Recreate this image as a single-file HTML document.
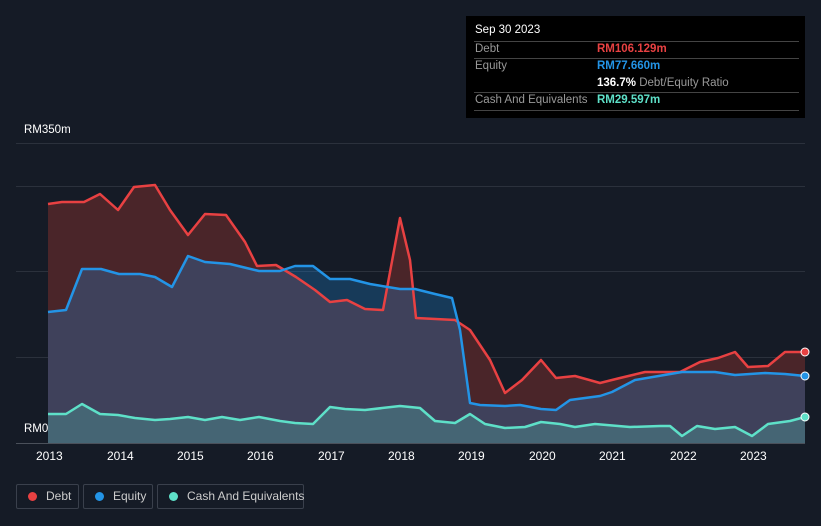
<!DOCTYPE html>
<html><head><meta charset="utf-8"><style>
body{margin:0;width:821px;height:526px;background:#151b26;font-family:"Liberation Sans",sans-serif;overflow:hidden;position:relative}
.t{position:absolute;color:#fff;font-size:12px}
.tip{position:absolute;left:466px;top:16px;width:339px;height:102px;background:#000;}
.tip div{position:absolute;font-size:11.5px;white-space:nowrap}
.ln{position:absolute;left:8px;width:325px;height:1px;background:#444}
.lg{position:absolute;top:484px;height:25px;border:1px solid #3a404c;border-radius:2px;color:#ccc;font-size:12px;line-height:23px;box-sizing:border-box;white-space:nowrap}
.lg i{display:inline-block;width:9px;height:9px;border-radius:50%;margin:0 9px 0 11px;vertical-align:-1px}
</style></head><body>
<svg width="821" height="526" style="position:absolute;left:0;top:0">
<g stroke="#2b313c" stroke-width="1">
<line x1="16" y1="143.5" x2="805" y2="143.5"/><line x1="16" y1="186.5" x2="805" y2="186.5"/><line x1="16" y1="271.5" x2="805" y2="271.5"/><line x1="16" y1="357.5" x2="805" y2="357.5"/></g>
<line x1="16" y1="443.5" x2="805" y2="443.5" stroke="#4a505a"/>
<path d="M48,204 L62,202 84,202 100,194 118,210 134,187 155,185 170,210 188,235 205,214 226,215 245,242 257,266 276,265 296,277 315,290 330,302 347,300 365,309 383,310 400,218 410,260 416,318 455,320 470,330 490,360 505,393 522,380 541,360 556,378 575,376 600,383 620,378 645,372 680,372 700,362 718,358 735,352 748,367 768,366 785,352 805,352 L805,443 48,443Z" fill="#4a2529"/>
<path d="M48,312 L66,310 82,269 101,269 119,274 140,274 155,277 172,287 188,256 205,262 230,264 259,271 280,271 295,266 313,266 330,279 350,279 370,284 400,289 415,289 435,294 452,298 460,330 470,403 480,405 505,406 520,405 541,409 556,410 570,400 600,396 612,392 635,380 682,372 715,372 735,375 765,373 785,374 805,376 L805,443 48,443Z" fill="rgba(33,150,243,0.25)"/>
<path d="M48,414 L66,414 82,404 100,414 118,415 135,418 155,420 170,419 188,417 205,420 222,417 240,420 259,417 280,421 295,423 313,424 330,407 345,409 365,410 400,406 420,408 435,421 455,423 470,414 485,424 505,428 525,427 541,422 560,424 575,427 595,424 630,427 660,426 670,426 682,436 697,426 715,429 735,427 752,436 768,424 790,421 805,417 L805,443 48,443Z" fill="rgba(88,212,190,0.25)"/>
<g fill="none" stroke-width="2.5" stroke-linejoin="round">
<path d="M48,204 L62,202 84,202 100,194 118,210 134,187 155,185 170,210 188,235 205,214 226,215 245,242 257,266 276,265 296,277 315,290 330,302 347,300 365,309 383,310 400,218 410,260 416,318 455,320 470,330 490,360 505,393 522,380 541,360 556,378 575,376 600,383 620,378 645,372 680,372 700,362 718,358 735,352 748,367 768,366 785,352 805,352" stroke="#e84142"/>
<path d="M48,312 L66,310 82,269 101,269 119,274 140,274 155,277 172,287 188,256 205,262 230,264 259,271 280,271 295,266 313,266 330,279 350,279 370,284 400,289 415,289 435,294 452,298 460,330 470,403 480,405 505,406 520,405 541,409 556,410 570,400 600,396 612,392 635,380 682,372 715,372 735,375 765,373 785,374 805,376" stroke="#2394e6"/>
<path d="M48,414 L66,414 82,404 100,414 118,415 135,418 155,420 170,419 188,417 205,420 222,417 240,420 259,417 280,421 295,423 313,424 330,407 345,409 365,410 400,406 420,408 435,421 455,423 470,414 485,424 505,428 525,427 541,422 560,424 575,427 595,424 630,427 660,426 670,426 682,436 697,426 715,429 735,427 752,436 768,424 790,421 805,417" stroke="#5ee0c8"/>
</g>
<circle cx="805" cy="352" r="4" fill="#e84142" stroke="#fff" stroke-width="1"/>
<circle cx="805" cy="376" r="4" fill="#2394e6" stroke="#fff" stroke-width="1"/>
<circle cx="805" cy="417" r="4" fill="#5ee0c8" stroke="#fff" stroke-width="1"/>
</svg>
<div class="t" style="left:24px;top:124px;font-size:11.5px">RM350m</div>
<div class="t" style="left:24px;top:423px;font-size:11.5px">RM0</div>
<div class="t" style="left:36px;top:449px">2013</div><div class="t" style="left:107px;top:449px">2014</div><div class="t" style="left:177px;top:449px">2015</div><div class="t" style="left:247px;top:449px">2016</div><div class="t" style="left:318px;top:449px">2017</div><div class="t" style="left:388px;top:449px">2018</div><div class="t" style="left:458px;top:449px">2019</div><div class="t" style="left:529px;top:449px">2020</div><div class="t" style="left:599px;top:449px">2021</div><div class="t" style="left:670px;top:449px">2022</div><div class="t" style="left:740px;top:449px">2023</div>
<div class="tip">
<div style="left:9px;top:8px;color:#fff">Sep 30 2023</div>
<div class="ln" style="top:25px"></div>
<div style="left:9px;top:27px;color:#999">Debt</div><div style="left:131px;top:27px;color:#e84142;font-weight:bold">RM106.129m</div>
<div class="ln" style="top:42px"></div>
<div style="left:9px;top:44px;color:#999">Equity</div><div style="left:131px;top:44px;color:#2394e6;font-weight:bold">RM77.660m</div>
<div style="left:131px;top:61px;color:#999"><b style="color:#fff">136.7%</b> Debt/Equity Ratio</div>
<div class="ln" style="top:76px"></div>
<div style="left:9px;top:78px;color:#999">Cash And Equivalents</div><div style="left:131px;top:78px;color:#5ee0c8;font-weight:bold">RM29.597m</div>
<div class="ln" style="top:94px"></div>
</div>
<div class="lg" style="left:16px;width:63px"><i style="background:#e84142"></i>Debt</div>
<div class="lg" style="left:83px;width:70px"><i style="background:#2394e6"></i>Equity</div>
<div class="lg" style="left:157px;width:147px"><i style="background:#5ee0c8"></i>Cash And Equivalents</div>
</body></html>
